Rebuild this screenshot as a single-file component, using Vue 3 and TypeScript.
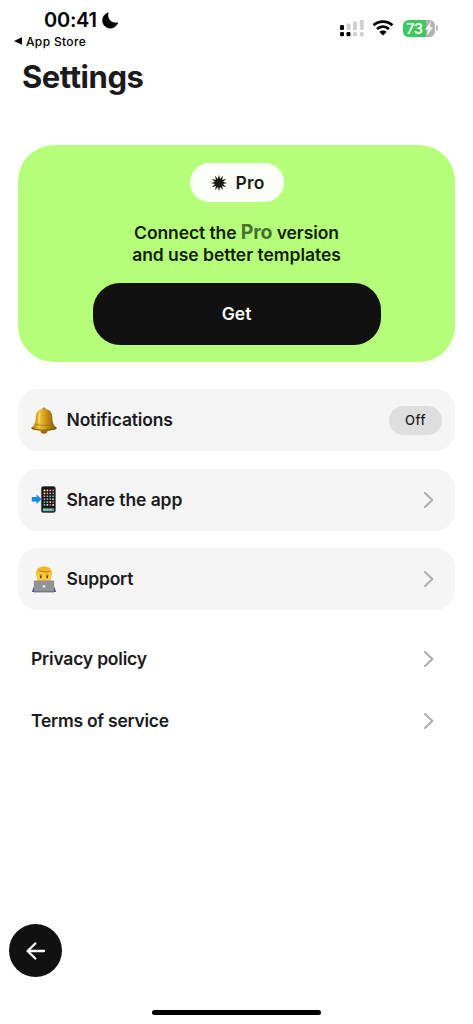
<script setup lang="ts">
interface Row {
  icon: 'bell' | 'phone' | 'support'
  label: string
  cls: string
  badge?: string
}

const rows: Row[] = [
  { icon: 'bell', label: 'Notifications', cls: 'l-notif', badge: 'Off' },
  { icon: 'phone', label: 'Share the app', cls: 'l-share' },
  { icon: 'support', label: 'Support', cls: 'l-support' },
]

const links = [
  { label: 'Privacy policy', cls: 'l-privacy' },
  { label: 'Terms of service', cls: 'l-terms' },
]

const rays = 12
const starPoints: string = Array.from({ length: rays * 2 }, (_, i) => {
  const r = i % 2 === 0 ? 8.3 : 4.2
  const a = (i * Math.PI) / rays
  return `${(9 + r * Math.sin(a)).toFixed(2)},${(9 - r * Math.cos(a)).toFixed(2)}`
}).join(' ')

const palette = ['#f4f4f4', '#62d873', '#f5a742', '#ee5750', '#5cb4f5', '#fbe566', '#c9ccd2', '#f5839f']
const appDots = Array.from({ length: 24 }, (_, i) => ({
  x: 12.6 + (i % 4) * 2.9,
  y: 3.6 + Math.floor(i / 4) * 2.9,
  fill: palette[(i * 5 + Math.floor(i / 4)) % palette.length],
}))
</script>

<template>
  <div class="screen">
    <header class="status">
      <div class="left">
        <div class="clock">
          <span class="time">00:41</span>
          <svg class="moon" width="17" height="17" viewBox="0 0 17 17">
            <path d="M6.2 .8C4.7 6.4 8.6 12 15.9 10.8C14.4 14.2 11.7 16.2 8.4 16.2C4 16.2 .6 12.9 .6 8.6C.6 5 2.7 1.9 6.2 .8Z" fill="#000" stroke="#000" stroke-width=".6" stroke-linejoin="round" />
          </svg>
        </div>
        <div class="return">
          <svg width="8" height="8" viewBox="0 0 8 8"><path d="M0 4L8 .3V7.7Z" fill="#000" /></svg>
          <span>App Store</span>
        </div>
      </div>
      <div class="right">
        <svg width="26" height="18" viewBox="0 0 26 18">
          <rect x="1" y="6" width="4" height="5" rx="1.3" fill="#000" />
          <rect x="7.5" y="4.5" width="4" height="6.5" rx="1.3" fill="#d0d0d0" />
          <rect x="14" y="2.5" width="4" height="8.5" rx="1.3" fill="#d0d0d0" />
          <rect x="20.8" y=".8" width="4" height="10.2" rx="1.3" fill="#d0d0d0" />
          <rect x="1" y="13" width="4" height="4.3" rx="1.3" fill="#000" />
          <rect x="7.5" y="13" width="4" height="4.3" rx="1.3" fill="#000" />
          <rect x="14" y="13" width="4" height="4.3" rx="1.3" fill="#d0d0d0" />
          <rect x="20.8" y="13" width="4" height="4.3" rx="1.3" fill="#d0d0d0" />
        </svg>
        <svg class="wifi" width="22" height="16" viewBox="0 0 22 16">
          <path d="M1.6 5.3C6.8.4 15.2.4 20.4 5.3" fill="none" stroke="#000" stroke-width="2.9" />
          <path d="M5 9C8.4 5.9 13.6 5.9 17 9" fill="none" stroke="#000" stroke-width="2.7" />
          <path d="M7.4 11.9C9.4 10 12.6 10 14.6 11.9L11 15.5Z" fill="#000" />
        </svg>
        <div class="battery">
          <span>73</span>
          <svg class="bolt" width="8" height="13" viewBox="0 0 8 13"><path d="M5.6 .5L.5 7.2H3.5L2.4 12.4L7.5 5.5H4.4Z" fill="#fff" stroke="#fff" stroke-width=".5" /></svg>
        </div>
        <i class="cap"></i>
      </div>
    </header>

    <h1>Settings</h1>

    <section class="promo">
      <div class="pill">
        <svg width="18" height="18" viewBox="0 0 18 18"><polygon :points="starPoints" fill="#171b14" /></svg>
        <span>Pro</span>
      </div>
      <p><span class="line1">Connect the <b>Pro</b> version</span><span class="line2">and use better templates</span></p>
      <button class="get">Get</button>
    </section>

    <section class="rows">
      <div v-for="row in rows" :key="row.label" class="row">
        <svg v-if="row.icon === 'bell'" class="icon" width="26" height="27" viewBox="0 0 26 27">
          <defs>
            <linearGradient id="gold" x1="0" x2="1">
              <stop offset="0" stop-color="#a87510" />
              <stop offset=".32" stop-color="#efc63c" />
              <stop offset=".55" stop-color="#cf9a18" />
              <stop offset="1" stop-color="#7d5508" />
            </linearGradient>
          </defs>
          <circle cx="13" cy="2.4" r="1.9" fill="#b58318" />
          <ellipse cx="13" cy="24.2" rx="3.4" ry="2.5" fill="#a5661c" />
          <path d="M13 1.7C7 1.8 4.9 5.5 4.7 10C4.5 15.6 3.4 18.6.5 20.6C-.2 22.4 1.8 22.6 4 23.1C9.8 24.5 16.3 24.5 22 23.1C24.3 22.6 26.2 22.4 25.5 20.6C22.6 18.6 21.5 15.6 21.3 10C21.1 5.5 19 1.8 13 1.7Z" fill="url(#gold)" />
          <path d="M4.2 17.2C10 18.9 16 18.9 21.8 17.2" fill="none" stroke="#9b6e10" stroke-width=".7" />
          <path d="M.8 21.3C8 23.8 18 23.8 25.2 21.3" fill="none" stroke="#765008" stroke-width="1" />
          <path d="M9 6C8.1 9 8.3 12.5 7.5 16" fill="none" stroke="#ffe886" stroke-width="1.3" opacity=".7" />
        </svg>
        <svg v-else-if="row.icon === 'phone'" class="icon" width="26" height="27" viewBox="0 0 26 27">
          <rect x="10.4" y=".5" width="14" height="26" rx="2" fill="#15171a" stroke="#444" stroke-width=".6" />
          <rect v-for="(dot, i) in appDots" :key="i" :x="dot.x" :y="dot.y" width="1.7" height="1.7" rx=".4" :fill="dot.fill" />
          <rect x="11.6" y="22.2" width="11.6" height="3" rx=".7" fill="#6d9a9f" />
          <path d="M13 23.7h1.7m1.2 0h1.7m1.2 0h1.7" stroke="#91e4b2" stroke-width="1.5" />
          <path d="M.8 11.1H5.6V8.6L10.6 13.3L5.6 18V15.5H.8Z" fill="#1688e8" />
        </svg>
        <svg v-else class="icon" width="26" height="27" viewBox="0 0 26 27">
          <path d="M1 26L2.4 21.5Q3 20 6 20H20Q23 20 23.6 21.5L25 26Z" fill="#3742b5" />
          <path d="M5.3 9C4.8 3.5 8 .8 13 .8C18 .8 21.2 3.5 20.7 9L20.1 13C19.5 18 16.2 19.5 13 19.5C9.8 19.5 6.5 18 5.9 13Z" fill="#fbcb3d" />
          <path d="M5.2 9.5C4.6 3.5 8 .5 13 .5C18.5.5 21.4 3.5 20.8 9.5L19.8 7.8C19.5 6.3 18.8 5.7 17.6 5.6C14 6 11 5.4 8.6 4.8C7.2 5.6 6.5 7 6.2 8.6Z" fill="#f2b726" />
          <path d="M8 4.6C11 5.8 14.5 6.3 18.6 5.6" stroke="#a56c12" stroke-width=".9" fill="none" />
          <path d="M8.5 8.9h2.8m3.4 0h2.8" stroke="#a96a13" stroke-width=".9" />
          <ellipse cx="9.8" cy="11" rx=".9" ry="1.4" fill="#593915" />
          <ellipse cx="16.2" cy="11" rx=".9" ry="1.4" fill="#593915" />
          <rect x="2.8" y="14.4" width="20.4" height="11.4" rx="1.1" fill="#929397" />
          <path d="M2.8 25.6H23.2V26.4H2.8Z" fill="#707176" />
          <circle cx="13" cy="20.2" r="1.3" fill="#f5f5f5" />
        </svg>
        <span class="label" :class="row.cls">{{ row.label }}</span>
        <span v-if="row.badge" class="badge">{{ row.badge }}</span>
        <svg v-else class="chev" width="12" height="18" viewBox="0 0 12 18"><path d="M2 2L9.3 9L2 16" /></svg>
      </div>
    </section>

    <nav class="links">
      <div v-for="link in links" :key="link.label" class="link">
        <span class="label" :class="link.cls">{{ link.label }}</span>
        <svg class="chev" width="12" height="18" viewBox="0 0 12 18"><path d="M2 2L9.3 9L2 16" /></svg>
      </div>
    </nav>

    <footer>
      <button class="back" aria-label="Back">
        <svg width="20" height="20" viewBox="0 0 20 20"><path d="M18 10H2.2M9.3 2.5L1.6 10L9.3 17.5" fill="none" stroke="#fff" stroke-width="2.3" stroke-linecap="round" stroke-linejoin="round" /></svg>
      </button>
      <div class="home"></div>
    </footer>
  </div>
</template>

<style>
body { margin: 0; background: #fff; }
</style>

<style scoped>
* { box-sizing: border-box; }
.screen {
  width: 473px;
  height: 1024px;
  display: flex;
  flex-direction: column;
  background: #fefefe;
  color: #1b1b1d;
  font-family: Inter, "Liberation Sans", sans-serif;
  overflow: hidden;
  white-space: nowrap;
}
.status { height: 52px; flex: none; display: flex; justify-content: space-between; color: #000; }
.left { padding: 8px 0 0 14px; }
.clock { display: flex; height: 24px; align-items: center; gap: 4px; padding-left: 30px; }
.time { width: 54px; font-size: 20px; font-weight: 600; letter-spacing: -.25px; }
.return { display: flex; align-items: center; gap: 4px; height: 18px; font-size: 12px; font-weight: 500; letter-spacing: .35px; }
.right { display: flex; align-items: center; height: 18px; margin: 19px 35px 0 0; }
.wifi { margin-left: 7px; }
.battery {
  margin-left: 9px; width: 32px; height: 17px; border-radius: 5.5px;
  background: linear-gradient(90deg, #3cca5c 73%, #b4b4b4 73%);
  color: #fff; font-size: 14.5px; font-weight: 600; letter-spacing: -.3px;
  display: flex; align-items: center; padding-left: 3px;
}
.battery span { width: 18px; }
.bolt { margin-left: 1px; }
.cap { width: 2px; height: 6px; margin-left: 1px; border-radius: 0 2px 2px 0; background: #b9b9b9; }
h1 { margin: 5px 0 0 22px; height: 40px; font-size: 31px; line-height: 40px; font-weight: 700; letter-spacing: -.45px; }
.promo {
  margin: 48px 18px 0; width: 437px; height: 217px; flex: none; border-radius: 36px;
  background: #b5ff7a; padding-top: 18px; color: #142009;
  display: flex; flex-direction: column; align-items: center;
}
.pill {
  width: 94px; height: 39px; border-radius: 20px; background: #fbfff7; color: #1b1b1d;
  display: flex; align-items: center; justify-content: center; gap: 7px; padding-left: 2px;
  font-size: 17.5px; font-weight: 600; letter-spacing: .2px;
}
p { margin: 20px 0 0; height: 43px; font-size: 17.5px; font-weight: 600; line-height: 22px; }
p span { display: block; text-align: center; height: 21.5px; }
p b { font-size: 19.5px; font-weight: 700; color: #487030; line-height: 20px; }
.line1 { letter-spacing: -.1px; }
.line2 { letter-spacing: -.03px; }
button { border: 0; padding: 0; font-family: inherit; background: #111; color: #fff; }
.get { margin-top: 17.5px; width: 288px; height: 62px; border-radius: 27px; font-size: 17.5px; font-weight: 600; }
.rows { margin: 27px 18px 0; display: flex; flex-direction: column; gap: 17.6px; }
.row { width: 437px; height: 62px; border-radius: 20px; background: #f5f5f5; display: flex; align-items: center; padding: 0 13px; }
.icon { flex: none; margin-right: 9.5px; }
.label { flex: 1; font-size: 17.5px; font-weight: 600; line-height: 24px; letter-spacing: -.2px; }
.l-notif { letter-spacing: -.16px; }
.l-share { letter-spacing: -.1px; }
.l-terms { letter-spacing: -.25px; }
.badge { width: 53px; height: 29px; border-radius: 15px; background: #dedede; text-align: center; line-height: 29px; font-size: 13px; font-weight: 500; letter-spacing: .5px; }
.chev { margin-right: 7px; fill: none; stroke: #b0b0b0; stroke-width: 2.2; stroke-linecap: round; stroke-linejoin: round; }
.links { margin: 18px 18px 0; }
.link { height: 62px; display: flex; align-items: center; padding: 0 13px; }
footer { margin-top: auto; height: 100px; flex: none; display: flex; flex-direction: column; justify-content: space-between; }
.back { width: 53px; height: 53px; margin-left: 9px; border-radius: 50%; display: grid; place-items: center; }
.home { width: 169px; height: 5px; border-radius: 3px; background: #000; margin: 0 0 9px 152px; }
</style>
